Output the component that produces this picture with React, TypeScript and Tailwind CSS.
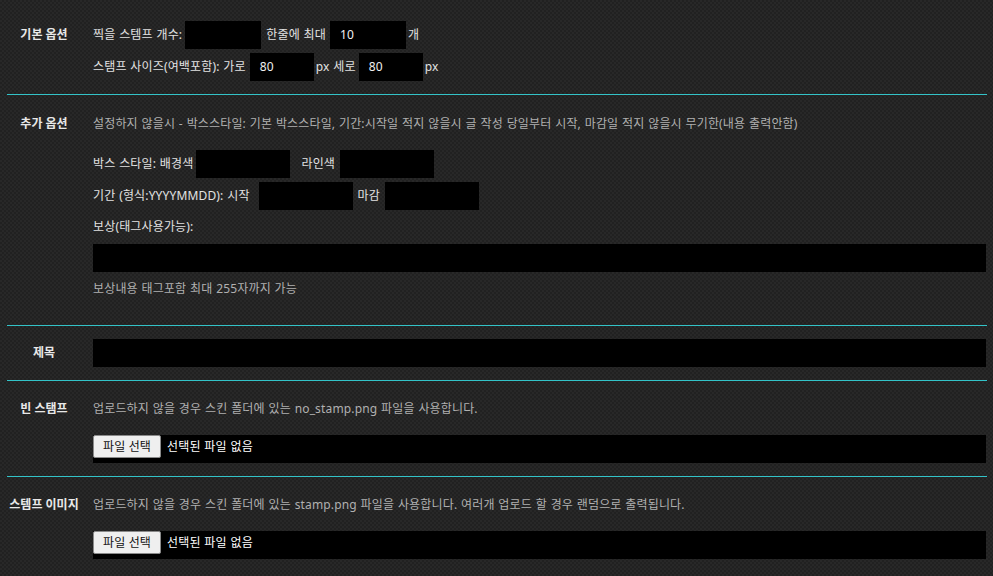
import React from "react";

const font = "font-['Noto_Sans','Noto_Sans_CJK_KR',sans-serif]";

const Box = ({ w, value }: { w: string; value?: string }) => (
  <div className={`${w} h-[28px] bg-black text-[#f0f0f0] px-[10px] flex items-center`}>{value}</div>
);

const FileBox = () => (
  <div className="h-[28px] bg-black flex items-start">
    <button className="h-[23px] px-[9px] bg-[#efefef] border border-[#8a8a8a] rounded-[2px] text-[#111] text-[12px] leading-none">
      파일 선택
    </button>
    <span className="ml-[6px] mt-[3px] text-white leading-[18px]">선택된 파일 없음</span>
  </div>
);

const Row = ({
  label,
  pad,
  first,
  children,
}: {
  label: string;
  pad: string;
  first: "box" | "text";
  children: React.ReactNode;
}) => (
  <div className={`flex border-t border-[#33c3c8] first:border-t-0 ${pad}`}>
    <div
      className={`w-[74px] shrink-0 flex justify-center font-bold text-[#e8e8e8] ${
        first === "box" ? "h-[28px] items-center" : "leading-[18px]"
      }`}
    >
      {label}
    </div>
    <div className="flex-1 pl-[12px] pr-[1px] flex flex-col tracking-[0.15px] [word-spacing:0.5px]">{children}</div>
  </div>
);

export default function App() {
  return (
    <div
      className={`min-h-[576px] w-full bg-[#242424] bg-[repeating-conic-gradient(#212121_0_25%,#282828_0_50%)] bg-size-[4px_4px] text-[12px] text-[#e2e2e2] ${font}`}
    >
      <div className="mx-[7px] w-[980px]">
        {/* 기본 옵션 */}
        <Row label="기본 옵션" pad="pt-[21px] pb-[13px]" first="box">
          <div className="flex items-center gap-[4px]">
            <span className="-mr-[1px]">찍을 스템프 개수:</span>
            <Box w="w-[76px]" />
            <span className="ml-[1px]">한줄에 최대</span>
            <Box w="w-[76px]" value="10" />
            <span className="-ml-[2px]">개</span>
          </div>
          <div className="flex items-center gap-[4px] mt-[4px]">
            <span>스탬프 사이즈(여백포함): 가로</span>
            <Box w="w-[64px]" value="80" />
            <span className="-ml-[2px] -mr-[1px]">px 세로</span>
            <Box w="w-[64px]" value="80" />
            <span className="-ml-[2px]">px</span>
          </div>
        </Row>

        {/* 추가 옵션 */}
        <Row label="추가 옵션" pad="pt-[20px] pb-[27px]" first="text">
          <p className="leading-[18px] text-[#b0b0b0]">
            설정하지 않을시 - 박스스타일: 기본 박스스타일, 기간:시작일 적지 않을시 글 작성 당일부터 시작, 마감일 적지 않을시 무기한(내용 출력안함)
          </p>
          <div className="flex items-center gap-[5px] mt-[17px]">
            <span className="-mr-[2px]">박스 스타일: 배경색</span>
            <Box w="w-[94px]" />
            <span className="ml-[6px]">라인색</span>
            <Box w="w-[94px]" />
          </div>
          <div className="flex items-center gap-[5px] mt-[4px]">
            <span className="mr-[4px]">기간 (형식:YYYYMMDD): 시작</span>
            <Box w="w-[94px]" />
            <span>마감</span>
            <Box w="w-[94px]" />
          </div>
          <p className="leading-[18px] mt-[8px]">보상(태그사용가능):</p>
          <div className="h-[28px] bg-black mt-[8px]" />
          <p className="leading-[18px] mt-[8px] text-[#b0b0b0]">보상내용 태그포함 최대 255자까지 가능</p>
        </Row>

        {/* 제목 */}
        <Row label="제목" pad="py-[13px]" first="box">
          <div className="h-[28px] bg-black" />
        </Row>

        {/* 빈 스탬프 */}
        <Row label="빈 스탬프" pad="pt-[19px] pb-[13px]" first="text">
          <p className="leading-[18px] text-[#b0b0b0]">
            업로드하지 않을 경우 스킨 폴더에 있는 no_stamp.png 파일을 사용합니다.
          </p>
          <div className="mt-[17px]">
            <FileBox />
          </div>
        </Row>

        {/* 스템프 이미지 */}
        <Row label="스템프 이미지" pad="pt-[19px] pb-[13px]" first="text">
          <p className="leading-[18px] text-[#b0b0b0]">
            업로드하지 않을 경우 스킨 폴더에 있는 stamp.png 파일을 사용합니다. 여러개 업로드 할 경우 랜덤으로 출력됩니다.
          </p>
          <div className="mt-[17px]">
            <FileBox />
          </div>
        </Row>
      </div>
    </div>
  );
}
